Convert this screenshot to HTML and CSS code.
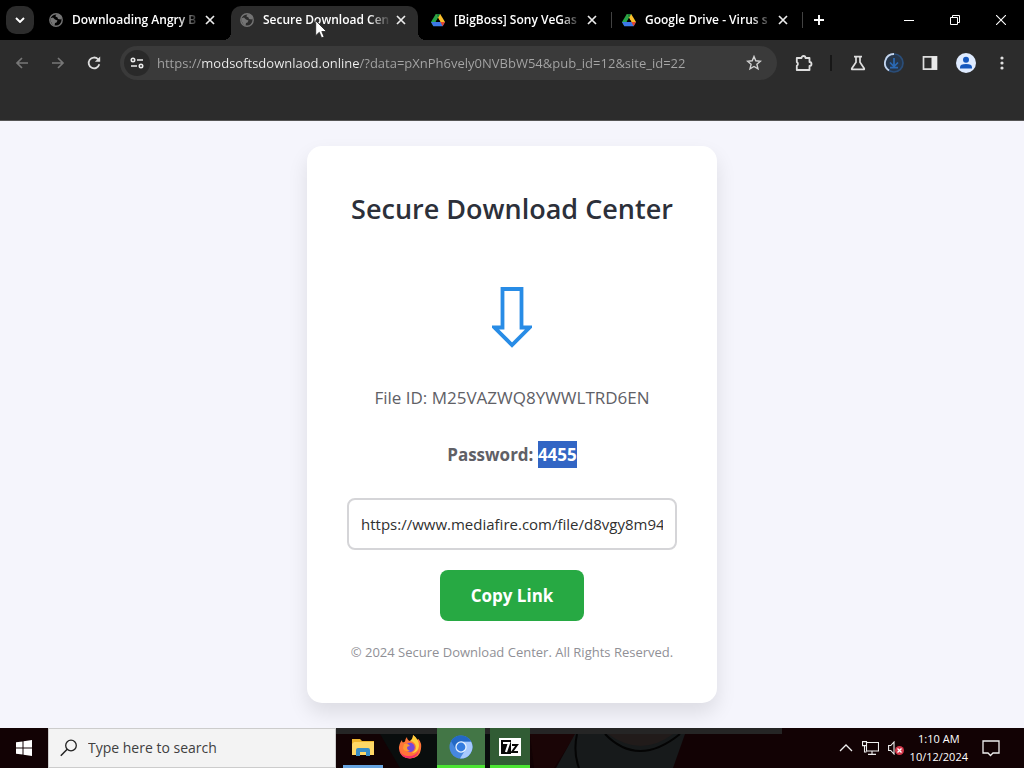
FILE: index.html
```html
<!DOCTYPE html>
<html lang="en">
<head>
<meta charset="utf-8">
<title>Secure Download Center</title>
<link rel="stylesheet" href="styles.css">
</head>
<body>
<svg class="defs" aria-hidden="true">
  <symbol id="globe" viewBox="0 0 14 14">
    <circle cx="7" cy="7" r="6.2" fill="none" stroke="currentColor" stroke-width="1.4"/>
    <path d="M1.5 5.2 4 4.5 6 6.500l2.500 1L7.500 9.500 6 10l-.5 3-2-1.500L1.500 8zM7 1.500 6.500 3.500l2 1 .5 1.500 2.500 .5 1.800-1.500-1-2.500L9.500 1z" fill="currentColor"/>
  </symbol>
  <symbol id="drive" viewBox="0 0 16 14">
    <path d="M5.500 0h5L8 4.600 2.700 14 0 9.400z" fill="#26a548"/>
    <path d="M5.500 0h5L16 9.400h-5.300z" fill="#fbc02b"/>
    <path d="M5.500 0h5L8 4.600z" fill="#168238"/>
    <path d="M0 9.400h16L13.300 14H2.700z" fill="#3d78e8"/>
    <path d="M10.700 9.400H16L13.300 14z" fill="#e5442f"/>
    <path d="M8 4.800 10.700 9.400H5.300z" fill="#000"/>
  </symbol>
  <symbol id="cross" viewBox="0 0 10 10">
    <path d="M1 1l8 8M9 1 1 9" stroke="currentColor" stroke-width="1.700"/>
  </symbol>
</svg>

<header class="browser">
  <div class="titlebar">
    <button class="tab-search" aria-label="Search tabs"><svg width="10" height="6" viewBox="0 0 10 6"><path d="M1 1l4 4 4-4" fill="none" stroke="#fff" stroke-width="1.900"/></svg></button>
    <nav class="tabs" aria-label="Tabs">
      <div class="tab">
        <svg class="favicon globe"><use href="#globe"/></svg>
        <a class="tab-title" href="#">Downloading Angry B</a>
        <button class="close" aria-label="Close tab"><svg><use href="#cross"/></svg></button>
      </div>
      <div class="tab active">
        <svg class="favicon globe"><use href="#globe"/></svg>
        <a class="tab-title" href="#">Secure Download Cen</a>
        <button class="close" aria-label="Close tab"><svg><use href="#cross"/></svg></button>
        <svg class="pointer" width="12" height="19" viewBox="0 0 12 19"><path d="M.7.700v15l3.600-3.400 2.300 5.600 2.500-1.100-2.300-5.300h4.700z" fill="#fff" stroke="#222" stroke-width=".8"/></svg>
      </div>
      <div class="tab divided">
        <svg class="favicon"><use href="#drive"/></svg>
        <a class="tab-title" href="#">[BigBoss] Sony VeGas</a>
        <button class="close" aria-label="Close tab"><svg><use href="#cross"/></svg></button>
      </div>
      <div class="tab divided">
        <svg class="favicon"><use href="#drive"/></svg>
        <a class="tab-title" href="#">Google Drive - Virus s</a>
        <button class="close" aria-label="Close tab"><svg><use href="#cross"/></svg></button>
      </div>
    </nav>
    <button class="new-tab" aria-label="New tab"><svg width="12" height="12" viewBox="0 0 12 12"><path d="M6 1v10M1 6h10" stroke="#fff" stroke-width="1.900"/></svg></button>
    <div class="window-controls">
      <button aria-label="Minimize"><svg width="10" height="10" viewBox="0 0 10 10"><path d="M0 5.500h10" stroke="#fff"/></svg></button>
      <button aria-label="Restore"><svg width="10" height="10" viewBox="0 0 10 10"><path d="M.5 2.500h7v7h-7zM2.500 2.500v-2h7v7h-2" fill="none" stroke="#fff"/></svg></button>
      <button aria-label="Close"><svg width="10" height="10" viewBox="0 0 10 10"><path d="M0 0l10 10M10 0 0 10" stroke="#fff" stroke-width="1.100"/></svg></button>
    </div>
  </div>

  <div class="toolbar">
    <button class="tool dim" aria-label="Back"><svg width="14" height="12" viewBox="0 0 14 12"><path d="M13 6H2M7 1 2 6l5 5" fill="none" stroke="currentColor" stroke-width="1.700"/></svg></button>
    <button class="tool dim" aria-label="Forward"><svg width="14" height="12" viewBox="0 0 14 12"><path d="M1 6h11M7 1l5 5-5 5" fill="none" stroke="currentColor" stroke-width="1.700"/></svg></button>
    <button class="tool" aria-label="Reload"><svg width="14" height="14" viewBox="0 0 14 14"><path d="M12.300 8.300A5.400 5.400 0 1 1 11 3.200L12.300 4.500" fill="none" stroke="currentColor" stroke-width="1.800"/><path d="M13.200.5v5.300H7.900z" fill="currentColor"/></svg></button>
    <div class="omnibox">
      <button class="site-info" aria-label="Site information"><svg width="14" height="12" viewBox="0 0 14 12"><g fill="none" stroke="#ececec" stroke-width="1.600"><circle cx="3" cy="3" r="1.700"/><path d="M7 3h6M1 9h6"/><circle cx="11" cy="9" r="1.700"/></g></svg></button>
      <input class="url" type="text" aria-label="Address" value="https://modsoftsdownlaod.online/?data=pXnPh6vely0NVBbW54&amp;pub_id=12&amp;site_id=22">
      <button class="star" aria-label="Bookmark"><svg width="16" height="16" viewBox="0 0 16 16"><path d="M8 1.500l1.800 4.300 4.700.4-3.600 3.100 1.100 4.600L8 11.500l-4 2.400 1.100-4.600L1.500 6.200l4.700-.4z" fill="none" stroke="#d2d2d2" stroke-width="1.400"/></svg></button>
    </div>
    <button class="tool" aria-label="Extensions"><svg width="18" height="18" viewBox="0 0 18 18"><path d="M1.800 4h4.700a2 2 0 0 1 4 0h4v4a2 2 0 0 1 0 4v4H1.800v-4.300a2 2 0 0 0 0-3.600z" fill="none" stroke="currentColor" stroke-width="1.800" stroke-linejoin="round"/></svg></button>
    <span class="rule"></span>
    <button class="tool" aria-label="Labs"><svg width="16" height="16" viewBox="0 0 16 16"><path d="M4 1.700h8M6 2v5.300L1.800 13.500q-.4.900.6.900h11.200q1 0 .6-.9L10 7.300V2" fill="none" stroke="currentColor" stroke-width="1.700"/></svg></button>
    <button class="tool" aria-label="Downloads"><svg width="20" height="20" viewBox="0 0 20 20"><circle cx="10" cy="10" r="9" fill="#26364a" stroke="#2a4d78" stroke-width="1.700"/><path d="M5 17.500A9 9 0 0 1 10 1" fill="none" stroke="#c4d5ed" stroke-width="1.800"/><path d="M10 5v8M6 9.500l4 4 4-4M6 14.700h8" fill="none" stroke="#2b69b4" stroke-width="1.700"/></svg></button>
    <button class="tool" aria-label="Side panel"><svg width="16" height="16" viewBox="0 0 16 16"><path d="M1.500 1.800h13v12.400h-13z" fill="none" stroke="#dedede" stroke-width="1.700"/><path d="M9.500 1.500H15v13H9.500z" fill="#e9e9e9"/></svg></button>
    <button class="tool" aria-label="Profile"><svg width="20" height="20" viewBox="0 0 20 20"><circle cx="10" cy="10" r="10" fill="#dfebff"/><circle cx="10" cy="6.800" r="3" fill="#1457be"/><path d="M4 15.500v-1.200q0-3.300 6-3.300t6 3.300v1.200z" fill="#1457be"/></svg></button>
    <button class="tool" aria-label="Menu"><svg width="4" height="14" viewBox="0 0 4 14"><g fill="#e0e0e0"><circle cx="2" cy="2" r="1.600"/><circle cx="2" cy="7" r="1.600"/><circle cx="2" cy="12" r="1.600"/></g></svg></button>
  </div>
  <div class="bookmarks"></div>
</header>

<main class="page">
  <section class="card">
    <h1>Secure Download Center</h1>
    <svg class="arrow" width="40" height="62" viewBox="0 0 40 62"><path d="M10.500 3h19v38.500h8L20 59 2.500 41.500h8z" fill="#fff" stroke="#288ce6" stroke-width="3.800"/></svg>
    <p class="file">File ID: M25VAZWQ8YWWLTRD6EN</p>
    <p class="password">Password: <span class="selected">4455</span></p>
    <input class="link" type="text" aria-label="Download link" value="https://www.mediafire.com/file/d8vgy8m94" readonly>
    <button class="copy">Copy Link</button>
    <footer>© 2024 Secure Download Center. All Rights Reserved.</footer>
  </section>
</main>

<div class="taskbar">
  <svg class="wallpaper" viewBox="0 0 1024 40" preserveAspectRatio="none" aria-hidden="true">
    <path d="M0 0h1024v40H0z" fill="#120204"/>
    <path d="M380 6h110l30 34H400z" fill="#090d0d"/>
    <path d="M530 6h46l-22 34h-20z" fill="#1a0506"/>
    <path d="M575 6h110l-12 34H556z" fill="#171a1b"/>
    <path d="M577 6q-4 18 2 34M605 6q33 34 75 0" fill="none" stroke="#040404" stroke-width="2"/>
    <path d="M608 6h65q-32 24-65 0z" fill="#211b1a"/>
    <path d="M336 0h446v6H336z" fill="#252525"/>
  </svg>
  <button class="start" aria-label="Start"><svg width="16" height="16" viewBox="0 0 16 16"><path d="M0 2.300 6.500 1.400v6.100H0zM7.500 1.200 16 0v7.500H7.500zM0 8.500h6.500v6.100L0 13.700zM7.500 8.500H16V16l-8.500-1.200z" fill="#fff"/></svg></button>
  <label class="search">
    <svg width="18" height="18" viewBox="0 0 18 18"><circle cx="11" cy="6.500" r="5.300" fill="none" stroke="#222" stroke-width="1.300"/><path d="M7.200 10.300.8 16.700" stroke="#222" stroke-width="1.500"/></svg>
    <input type="text" placeholder="Type here to search" aria-label="Type here to search">
  </label>
  <div class="apps">
    <button class="app files" aria-label="File Explorer"><svg width="22" height="20" viewBox="0 0 22 20"><path d="M0 2h8l2 2h12v13H0z" fill="#efb52e"/><path d="M2 5h20v13H0V7z" fill="#ffd766"/><path d="M4 19v-6q0-2 2-2h10q2 0 2 2v6h-4v-4H8v4z" fill="#398dc7"/></svg></button>
    <button class="app" aria-label="Firefox"><svg width="24" height="24" viewBox="0 0 24 24"><path d="M4 5q0 2 1 2.500L7 6.500Q7 4 9 2q0 3 3 4 3-2 3-6 3 2 4 5l1.500-1Q24 8 23 14q-1 9-11 9.500Q2 23 1 14 .7 9 4 5z" fill="#ff7438"/><path d="M15 0q6 4 6 11-1 7-7 7 6-4 3-9-2-3-5-3 3-2 3-6z" fill="#ffce39"/><path d="M1 13q2 9 10 8 7 0 10-6-2 8-9 8.500Q2 23 1 13z" fill="#f42f66"/><circle cx="12" cy="12.500" r="4.700" fill="#7748d8"/><path d="M6 9q4-1 6 2-3 0-3 2 0 2 3 3-6 1-7-3z" fill="#ff9a31"/></svg></button>
    <button class="app running" aria-label="Chromium"><svg width="24" height="24" viewBox="0 0 24 24"><circle cx="12" cy="12" r="11.500" fill="#4687df"/><path d="M12 6.500h10A11.500 11.500 0 0 1 11 23.500l5.500-9z" fill="#a7c9ff"/><path d="M2 6A11.500 11.500 0 0 1 22 6.500H12l-5 8z" fill="#2368c4"/><circle cx="12" cy="12" r="5.700" fill="#eaf3ff"/><circle cx="12" cy="12" r="4.400" fill="#347ce0"/></svg></button>
    <button class="app zip" aria-label="7-Zip"><svg width="22" height="18" viewBox="0 0 22 18"><path d="M0 0h22v18H0z" fill="#fff"/><path d="M2 2h10v14H2z" fill="#080808"/><path d="M4 5h6l-3 9" fill="none" stroke="#fff" stroke-width="2.200"/><path d="M13 7h5l-5 7h6" fill="none" stroke="#080808" stroke-width="2"/></svg></button>
  </div>
  <div class="tray">
    <svg width="14" height="8" viewBox="0 0 14 8"><path d="M1 7l6-6 6 6" fill="none" stroke="#eee" stroke-width="1.300"/></svg>
    <svg width="17" height="14" viewBox="0 0 17 14"><path d="M5 1.500h11.500v8.500H4.500V5M10 10v3M6 13.400h8M.5.600h4v4h-4zM2.500 5v6h2" fill="none" stroke="#eee" stroke-width="1.100"/></svg>
    <svg width="16" height="14" viewBox="0 0 16 14"><path d="M.6 4.500h2.200L6 1v12L2.800 9.500H.6z" fill="none" stroke="#eee" stroke-width="1.100"/><circle cx="11.500" cy="9.500" r="4.500" fill="#d5384b"/><path d="M9.500 7.500l4 4M13.500 7.500l-4 4" stroke="#fff" stroke-width="1.300"/></svg>
  </div>
  <div class="clock"><span>1:10 AM</span><span>10/12/2024</span></div>
  <button class="notice" aria-label="Notifications"><svg width="18" height="17" viewBox="0 0 18 17"><path d="M1 1h16v12h-6l-2.500 2.500L6 13H1z" fill="none" stroke="#eee" stroke-width="1.300"/></svg></button>
</div>
</body>
</html>
```
FILE: styles.css
```css
* { box-sizing: border-box; }
body {
  margin: 0;
  min-height: 100vh;
  display: flex;
  flex-direction: column;
  font-family: "Open Sans", "Noto Sans", sans-serif;
  background: #f5f5fc;
}
button {
  display: grid;
  place-items: center;
  padding: 0;
  border: 0;
  background: none;
  font: inherit;
  color: inherit;
}
a { color: inherit; text-decoration: none; }
svg { display: block; flex: none; }
.defs { position: absolute; width: 0; height: 0; }

.browser { background: #2c2c2c; color: #ececec; }
.titlebar {
  display: flex;
  align-items: center;
  height: 40px;
  padding-left: 6px;
  background: #000;
}
.tab-search {
  width: 28px;
  height: 28px;
  margin-right: 6px;
  border-radius: 10px;
  background: #2c2c2c;
}
.tabs {
  display: flex;
  align-self: flex-end;
  flex: 0 1 760px;
  gap: 4px;
  min-width: 0;
}
.tab {
  position: relative;
  display: flex;
  align-items: center;
  flex: 1;
  min-width: 0;
  height: 34px;
  padding: 0 11px 6px 9px;
  border-radius: 10px 10px 0 0;
}
.tab.active { background: #2c2c2c; }
.tab.active::before,
.tab.active::after {
  content: "";
  position: absolute;
  bottom: 0;
  width: 8px;
  height: 8px;
}
.tab.active::before { left: -8px; background: radial-gradient(circle at 0 0, transparent 8px, #2c2c2c 8px); }
.tab.active::after { right: -8px; background: radial-gradient(circle at 100% 0, transparent 8px, #2c2c2c 8px); }
.tab.divided::after {
  content: "";
  position: absolute;
  right: -3px;
  top: 6px;
  width: 1px;
  height: 16px;
  background: #424242;
}
.favicon { width: 14px; height: 14px; margin-right: 9px; }
.favicon.globe { color: #747474; }
.tab-title {
  flex: 1;
  min-width: 0;
  overflow: hidden;
  white-space: nowrap;
  font-size: 12px;
  font-weight: 600;
  line-height: 18px;
  color: #fff;
  mask-image: linear-gradient(to right, #000 84%, rgba(0, 0, 0, .1));
}
.close { width: 12px; height: 12px; margin-left: 6px; }
.close svg { width: 10px; height: 10px; }
.pointer { position: absolute; left: 84px; top: 14px; }
.new-tab { width: 28px; height: 28px; margin-left: 5px; }
.window-controls { display: flex; margin-left: auto; }
.window-controls button { width: 46px; height: 40px; }

.toolbar {
  display: flex;
  align-items: center;
  gap: 8px;
  height: 46px;
  padding: 0 8px;
}
.tool { width: 28px; height: 28px; color: #dedede; }
.tool.dim { color: #777; }
.omnibox {
  display: flex;
  align-items: center;
  flex: 1;
  height: 34px;
  margin: 0 5px 0 4px;
  padding: 0 4px;
  border-radius: 17px;
  background: #3a3a3a;
}
.site-info { width: 26px; height: 26px; border-radius: 13px; background: #292929; }
.url {
  flex: 1;
  min-width: 0;
  margin-left: 7px;
  padding: 0;
  border: 0;
  outline: 0;
  font-family: inherit;
  font-size: 13px;
  line-height: 24px;
  color: #f1f1f1;
  background: linear-gradient(to right, #a6a6a6 45px, #f1f1f1 45px 202px, #a6a6a6 202px);
  background-clip: text;
  -webkit-text-fill-color: transparent;
}
.star { width: 28px; height: 28px; margin-right: 5px; }
.rule { width: 2px; height: 16px; margin: 0 4px; background: #171717; }
.bookmarks { height: 35px; border-bottom: 1px solid #555; }

.page {
  flex: 1;
  display: flex;
  justify-content: center;
  align-items: flex-start;
  padding: 25px 16px;
  background: #f5f5fc;
}
.card {
  display: flex;
  flex-direction: column;
  align-items: center;
  width: 100%;
  max-width: 410px;
  padding: 40px;
  border-radius: 15px;
  background: #fff;
  box-shadow: 0 10px 20px rgba(0, 0, 0, .1);
}
h1 {
  margin: 0;
  font-size: 27px;
  font-weight: 600;
  line-height: 46px;
  white-space: nowrap;
  color: #2c303a;
}
.arrow { margin: 54px 0 36px; }
.file, .password { margin: 0; font-size: 17px; line-height: 27px; color: #606066; white-space: nowrap; }
.file { margin-bottom: 30px; }
.password { font-weight: 700; }
.selected { display: inline-block; background: #3265c4; color: #fff; }
.link {
  width: 100%;
  height: 52px;
  margin: 30px 0 20px;
  padding: 0 12px;
  border: 2px solid #d5d5d8;
  border-radius: 8px;
  background: #fff;
  font-family: inherit;
  font-size: 15px;
  color: #303030;
}
.copy {
  padding: 12px 31px;
  border-radius: 8px;
  background: #27a943;
  font-size: 17px;
  font-weight: 700;
  line-height: 27px;
  color: #fff;
}
footer { margin-top: 20px; font-size: 13px; line-height: 22px; color: #909096; white-space: nowrap; }

.taskbar {
  position: relative;
  display: flex;
  align-items: stretch;
  height: 40px;
  background: #120204;
  color: #fff;
}
.taskbar > * { z-index: 1; }
.taskbar > .wallpaper { position: absolute; inset: 0; z-index: 0; width: 100%; height: 100%; }
.start { width: 48px; }
.search {
  display: flex;
  align-items: center;
  gap: 10px;
  flex: 0 1 288px;
  padding: 0 11px;
  background: #f3f3f3;
  border: 1px solid #ccc;
}
.search input {
  flex: 1;
  min-width: 0;
  padding: 0;
  border: 0;
  outline: 0;
  background: none;
  font-family: inherit;
  font-size: 14px;
  line-height: 20px;
}
.search input::placeholder { color: #404040; opacity: 1; }
.apps { display: flex; gap: 5px; padding-left: 7px; }
.app { width: 44px; border: 0 solid transparent; border-bottom-width: 3px; }
.files { width: 40px; border-bottom-color: #67a3df; }
.running { width: 48px; background: #437646; border-bottom-color: #4be333; }
.zip { width: 40px; background: #315c34; border-bottom-color: #4be333; }
.tray { display: flex; align-items: center; gap: 9px; margin-left: auto; }
.clock {
  display: flex;
  flex-direction: column;
  justify-content: center;
  align-items: center;
  margin: 0 10px 0 6px;
  font-size: 11px;
  line-height: 18px;
}
.notice { width: 26px; margin-right: 20px; }
```
